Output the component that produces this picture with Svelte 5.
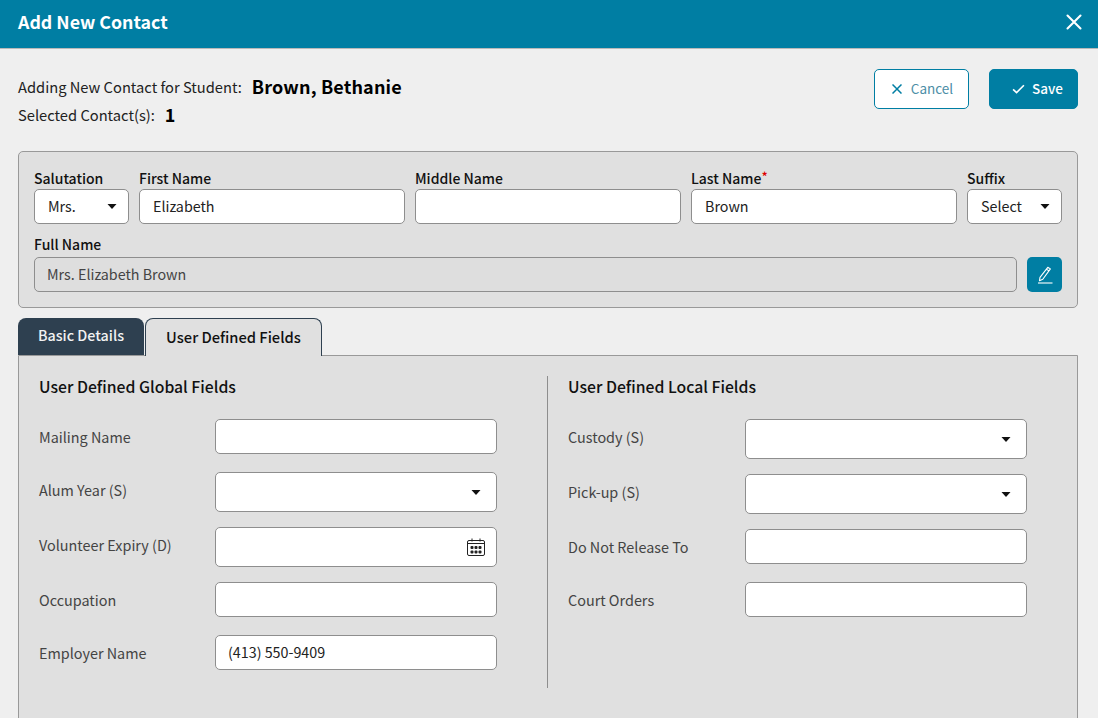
<script>
  const leftRows = [
    { label: 'Mailing Name', kind: 'text', value: '' },
    { label: 'Alum Year (S)', kind: 'select', value: '' },
    { label: 'Volunteer Expiry (D)', kind: 'date', value: '' },
    { label: 'Occupation', kind: 'text', value: '' },
    { label: 'Employer Name', kind: 'text', value: '(413) 550-9409' }
  ];
  const rightRows = [
    { label: 'Custody (S)', kind: 'select', value: '' },
    { label: 'Pick-up (S)', kind: 'select', value: '' },
    { label: 'Do Not Release To', kind: 'text', value: '' },
    { label: 'Court Orders', kind: 'text', value: '' }
  ];
</script>

{#snippet caret()}
  <svg class="caret" width="10" height="5" viewBox="0 0 10 5"><path d="M0.5 0h9L5 5z" fill="#111" /></svg>
{/snippet}

{#snippet udfRow(row)}
  <div class="udf-row" class:tall={row.kind !== 'text'}>
    <span class="udf-label">{row.label}</span>
    <div class="box udf-box">
      <span class="val">{row.value}</span>
      {#if row.kind === 'select'}
        {@render caret()}
      {:else if row.kind === 'date'}
        <svg class="cal" width="18" height="18" viewBox="0 0 18 18" fill="none" stroke="#222" stroke-width="1">
          <rect x="0.5" y="2.5" width="17" height="15" rx="1.5" />
          <path d="M1 5.5h16M5 0.5v3M13 0.5v3" />
          <g fill="#222" stroke="none">
            <rect x="3.5" y="8" width="3" height="3" rx="1" /><rect x="7.5" y="8" width="3" height="3" rx="1" /><rect x="11.5" y="8" width="3" height="3" rx="1" />
            <rect x="3.5" y="12.5" width="3" height="3" rx="1" /><rect x="7.5" y="12.5" width="3" height="3" rx="1" /><rect x="11.5" y="12.5" width="3" height="3" rx="1" />
          </g>
        </svg>
      {/if}
    </div>
  </div>
{/snippet}

<div class="page">
  <header class="topbar">
    <h1>Add New Contact</h1>
    <svg class="close" width="16" height="16" viewBox="0 0 16 16" stroke="#fff" stroke-width="2.1" stroke-linecap="round"><path d="M1.5 1.5l13 13M14.5 1.5l-13 13" /></svg>
  </header>

  <main class="content">
    <section class="summary">
      <div class="meta">
        <div class="line first"><span>Adding New Contact for Student:</span><strong class="student">Brown, Bethanie</strong></div>
        <div class="line"><span>Selected Contact(s):</span><strong class="count">1</strong></div>
      </div>
      <div class="actions">
        <button class="btn cancel">
          <svg width="10" height="10" viewBox="0 0 10 10" stroke="#007ea3" stroke-width="1.5"><path d="M0.5 0.5l9 9M9.5 0.5l-9 9" /></svg>
          <span>Cancel</span>
        </button>
        <button class="btn save">
          <svg width="13" height="10" viewBox="0 0 12 9" fill="none" stroke="#fff" stroke-width="1.5"><path d="M1 4.8l3.2 3L11 1" /></svg>
          <span>Save</span>
        </button>
      </div>
    </section>

    <section class="panel">
      <div class="name-grid">
        <div class="field"><span class="lbl">Salutation</span><div class="box sel"><span class="val up">Mrs.</span>{@render caret()}</div></div>
        <div class="field"><span class="lbl">First Name</span><div class="box"><span class="val">Elizabeth</span></div></div>
        <div class="field"><span class="lbl">Middle Name</span><div class="box"></div></div>
        <div class="field"><span class="lbl">Last Name<i class="req">*</i></span><div class="box"><span class="val">Brown</span></div></div>
        <div class="field"><span class="lbl">Suffix</span><div class="box sel"><span class="val up">Select</span>{@render caret()}</div></div>
      </div>
      <div class="full-row">
        <div class="field grow"><span class="lbl">Full Name</span><div class="box disabled"><span class="val">Mrs. Elizabeth Brown</span></div></div>
        <button class="edit" aria-label="Edit">
          <svg width="16" height="18" viewBox="0 0 16 18" fill="none" stroke="#fff" stroke-width="1.1" stroke-linejoin="round"><path d="M10.8 1.3l2.6 1.6-7.6 10.4-3.3 1.4.5-3.4zM9.4 3.2l2.6 1.7" /><path d="M1 17h14.5" /></svg>
        </button>
      </div>
    </section>

    <nav class="tabs">
      <div class="tab dark">Basic Details</div>
      <div class="tab active">User Defined Fields</div>
    </nav>

    <section class="tabpanel">
      <div class="col left">
        <h2>User Defined Global Fields</h2>
        {#each leftRows as row}{@render udfRow(row)}{/each}
      </div>
      <div class="col right">
        <h2>User Defined Local Fields</h2>
        {#each rightRows as row}{@render udfRow(row)}{/each}
      </div>
    </section>
  </main>
</div>

<style>
  :global(body) { margin: 0; background: #efefef; }
  .page {
    width: 1098px; height: 718px; overflow: hidden; background: #efefef; color: #222;
    font-family: "Noto Sans CJK SC", "Noto Sans", sans-serif; font-size: 14.4px;
  }
  .topbar {
    height: 49px; box-sizing: border-box; background: #007ea3; border-bottom: 1px solid #b9b9b9;
    display: flex; align-items: center; justify-content: space-between; padding: 0 16px 5px 18px;
  }
  h1 { margin: 0; color: #fff; font-size: 17.8px; font-weight: 600; line-height: 1; }
  .close { position: relative; top: 0.5px; }
  .content { padding: 0 20px 0 18px; }
  .summary { display: flex; justify-content: space-between; height: 102px; padding-top: 20px; box-sizing: border-box; }
  .line { display: flex; align-items: center; height: 20px; color: #222; font-size: 14.7px; }
  .line.first { height: 36px; margin-top: -1px; }
  .student { margin-left: 10px; font-size: 18px; font-weight: 700; color: #000; letter-spacing: 0.15px; }
  .count { margin-left: 10px; font-size: 18px; font-weight: 700; color: #000; }
  .actions { display: flex; gap: 20px; }
  .btn {
    height: 40px; border-radius: 5px; font: inherit; display: flex; align-items: center; justify-content: center; box-sizing: border-box;
  }
  .btn span { position: relative; top: -1px; }
  .cancel { width: 95px; background: #fff; border: 1px solid #007ea3; color: #4c8ea6; font-size: 13.5px; gap: 9px; padding: 0 0 0 2px; }
  .save { width: 89px; background: #007ea3; border: 1px solid #007ea3; color: #fff; font-weight: 500; font-size: 13.5px; gap: 7px; padding: 0 0 0 8px; }
  .panel {
    height: 157px; box-sizing: border-box; background: #e0e0e0; border: 1px solid #999; border-radius: 5px; padding: 15px 15px 0;
  }
  .name-grid { display: grid; grid-template-columns: 95px 266px 266px 266px 95px; gap: 10px; }
  .field { display: flex; flex-direction: column; min-width: 0; }
  .lbl { height: 22px; line-height: 22px; font-size: 14px; font-weight: 500; color: #111; }
  .req { color: #d00; font-style: normal; font-size: 13px; vertical-align: 2px; line-height: 0; }
  .box {
    height: 35px; box-sizing: border-box; background: #fff; border: 1px solid #8e8e8e; border-radius: 5px;
    display: flex; align-items: center; justify-content: space-between; padding: 0 12px 0 13px;
  }
  .sel { padding-right: 11px; }
  .val { font-size: 14.3px; color: #222; position: relative; top: -1px; }
  .up { top: -1px; }
  .full-row { display: flex; align-items: flex-end; gap: 10px; margin-top: 10px; }
  .full-row .lbl { height: 23px; line-height: 21px; }
  .grow { flex: 1; }
  .disabled { background: #dedede; padding-left: 12px; }
  .disabled .val { color: #444; }
  .edit {
    width: 35px; height: 35px; border: 0; padding: 0; background: #007ea3; border-radius: 5px; display: flex; align-items: center; justify-content: center;
  }
  .tabs { display: flex; gap: 1px; margin-top: 10px; height: 37px; }
  .tab { box-sizing: border-box; font-weight: 500; border-radius: 8px 8px 0 0; text-align: center; }
  .dark { width: 126px; height: 37px; line-height: 34px; background: #2e4050; color: #f2f2f2; font-size: 14.3px; }
  .active {
    width: 177px; height: 38px; line-height: 36px; background: #e0e0e0; border: 1px solid #2e4050; border-bottom: 0; color: #111;
    position: relative; z-index: 1; font-size: 14.7px;
  }
  .tabpanel {
    box-sizing: border-box; height: 400px; background: #e0e0e0; border: 1px solid #999; border-radius: 0 0 5px 5px;
    padding: 20px 0 0 20px; display: flex; align-items: flex-start;
  }
  .col { box-sizing: border-box; }
  .left { width: 509px; height: 312px; border-right: 1px solid #8e8e8e; padding-right: 50px; }
  .right { padding-left: 20px; width: 479px; }
  h2 { margin: 0 0 20px; height: 23px; line-height: 21px; font-size: 15.75px; font-weight: 500; color: #111; }
  .udf-row { display: flex; align-items: flex-start; margin-bottom: 18px; }
  .udf-row.tall { margin-bottom: 15px; }
  .udf-label { flex: 0 0 176px; height: 35px; line-height: 36px; font-size: 14.4px; color: #444; }
  .right .udf-label { flex-basis: 177px; }
  .udf-box { width: 282px; flex: none; padding: 0 15px 0 12px; }
  .tall .udf-box { height: 40px; }
  .tall .udf-label { height: 40px; }
  .caret { flex: none; }
  .cal { flex: none; margin-right: -4px; }
</style>
